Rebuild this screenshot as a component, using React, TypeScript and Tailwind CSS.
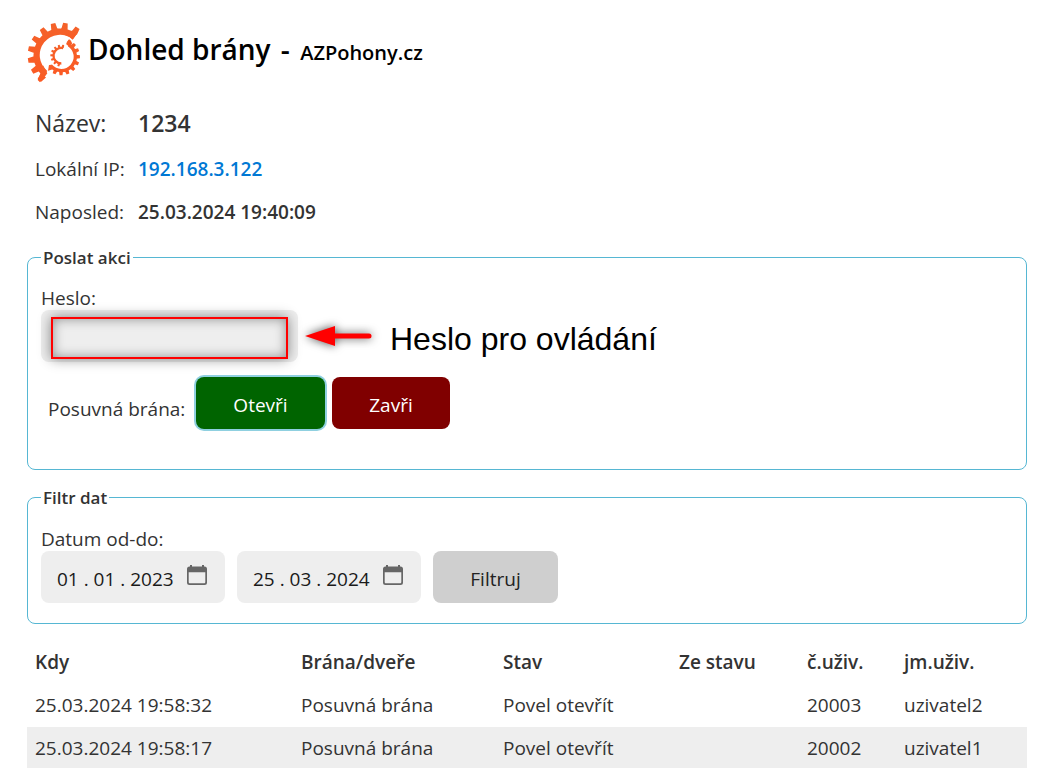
import { useState } from "react";

type Gear = {
  cx: number;
  cy: number;
  inner: number;
  outer: number;
  tip: number;
  from: number;
  to: number;
  teeth: number[];
  half: number;
};

const point = (g: Gear, r: number, deg: number) => {
  const a = (deg * Math.PI) / 180;
  return `${(g.cx + r * Math.cos(a)).toFixed(1)} ${(g.cy - r * Math.sin(a)).toFixed(1)}`;
};

// Partial gear ring, angles in degrees counter-clockwise from the right.
function gearPath(g: Gear) {
  const large = g.to - g.from > 180 ? 1 : 0;
  const ring =
    `M${point(g, g.outer, g.from)} A${g.outer} ${g.outer} 0 ${large} 0 ${point(g, g.outer, g.to)} ` +
    `L${point(g, g.inner, g.to)} A${g.inner} ${g.inner} 0 ${large} 1 ${point(g, g.inner, g.from)}Z`;
  const teeth = g.teeth.map(
    (t) =>
      `M${point(g, g.outer - 2, t + g.half * 1.3)} L${point(g, g.outer - 2, t - g.half * 1.3)} ` +
      `L${point(g, g.tip, t - g.half * 0.75)} L${point(g, g.tip, t + g.half * 0.75)}Z`
  );
  return ring + teeth.join("");
}

const bigGear: Gear = {
  cx: 136, cy: 136, inner: 61, outer: 81, tip: 98, from: 52, to: 230, half: 5.4,
  teeth: [58, 81, 103, 125, 147, 168, 189, 210, 230],
};
const middleGear: Gear = {
  cx: 139, cy: 140, inner: 37, outer: 47, tip: 56, from: -140, to: 58, half: 6,
  teeth: [-113, -91, -69, -46, -23, 0, 22, 43, 62],
};
const smallGear: Gear = {
  cx: 139, cy: 137, inner: 20, outer: 27, tip: 33, from: 76, to: 270, half: 6.5,
  teeth: [80, 104, 128, 153, 178, 203, 228, 254],
};

function Logo() {
  return (
    <svg viewBox="36 36 162 186" className="h-[62px] w-[54px] shrink-0" aria-hidden="true">
      <defs>
        <linearGradient id="logo" x1="0" y1="0" x2="0" y2="1">
          <stop offset="0" stopColor="#f4622a" />
          <stop offset="1" stopColor="#fb5a24" />
        </linearGradient>
      </defs>
      <g fill="url(#logo)">
        <path d={gearPath(bigGear)} />
        <path d="M170 62 L190 64 L173 89 Q163 79 150 76Z" />
        <path d="M84 166 L97 190 L88 202 L75 217 L68 210 L78 186Z" />
        <path d={gearPath(middleGear)} />
        <path d="M163 88 L153 102 L163 110 L172 100Z" />
        <path d="M99 182 L102 165 L110 164 L114 178Z" />
        <path d={gearPath(smallGear)} />
      </g>
    </svg>
  );
}

function CalendarIcon() {
  return (
    <svg viewBox="0 0 20 20" className="h-5 w-5" aria-hidden="true">
      <path
        fill="#666"
        fillRule="evenodd"
        d="M3 0h2v1.500h10V0h2v1.500h.5A2.500 2.500 0 0 1 20 4v13.500a2.500 2.500 0 0 1-2.500 2.500h-15A2.500 2.500 0 0 1 0 17.500V4a2.500 2.500 0 0 1 2.500-2.500H3zM1.700 7.200v9.800c0 .8.500 1.300 1.300 1.300h14c.8 0 1.300-.5 1.300-1.300V7.200z"
      />
    </svg>
  );
}

function DateField({ label, initial }: { label: string; initial: string }) {
  const [value, setValue] = useState(initial);
  return (
    <div className="flex h-13 w-[184px] items-center rounded-lg bg-[#eee] pr-[18px] pl-4">
      <input
        type="text"
        aria-label={label}
        value={value}
        onChange={(e) => setValue(e.target.value)}
        className="h-full min-w-0 flex-1 bg-transparent pt-1 text-[#1a1a1a] outline-none"
      />
      <button type="button" aria-label={`${label} – kalendář`} className="pb-1">
        <CalendarIcon />
      </button>
    </div>
  );
}

const rows = [
  ["25.03.2024 19:58:32", "Posuvná brána", "Povel otevřít", "", "20003", "uzivatel2"],
  ["25.03.2024 19:58:17", "Posuvná brána", "Povel otevřít", "", "20002", "uzivatel1"],
];

const columns = [
  { title: "Kdy", width: "w-[26.6%]" },
  { title: "Brána/dveře", width: "w-[20.2%]" },
  { title: "Stav", width: "w-[17.6%]" },
  { title: "Ze stavu", width: "w-[12.8%]" },
  { title: "č.uživ.", width: "w-[9.7%]" },
  { title: "jm.uživ.", width: "w-[13.1%]" },
];

export default function App() {
  const [password, setPassword] = useState("");
  return (
    <main className="bg-white pt-[22px] pr-7 pl-[27px] font-['Open_Sans','Noto_Sans',sans-serif] text-[19px] leading-[27px] text-[#333]">
      <header className="flex items-center gap-[7px]">
        <Logo />
        <h1 className="pb-1 text-[28px] leading-10 font-semibold text-black">
          Dohled brány <span className="px-[3px]">-</span> <small className="text-[20px]">AZPohony.cz</small>
        </h1>
      </header>

      <dl className="mt-[15px] grid grid-cols-[103px_1fr] px-2">
        <dt className="py-2 text-[23px] leading-[33px]">Název:</dt>
        <dd className="py-2 text-[23px] leading-[33px] font-semibold">1234</dd>
        <dt className="py-2">Lokální IP:</dt>
        <dd className="py-2 font-semibold">
          <a href="http://192.168.3.122" className="text-[#0078d4]">192.168.3.122</a>
        </dd>
        <dt className="py-2">Naposled:</dt>
        <dd className="py-2 font-semibold">25.03.2024 19:40:09</dd>
      </dl>

      <fieldset className="mt-[10px] rounded-lg border border-[#56b7d3] px-[13px] pt-[15px] pb-10">
        <legend className="px-0.5 text-[17px] font-semibold">Poslat akci</legend>
        <label htmlFor="password" className="block leading-6">Heslo:</label>
        <div className="flex items-center">
          <div className="relative w-[257px]">
            <input
              id="password"
              type="password"
              value={password}
              onChange={(e) => setPassword(e.target.value)}
              className="block h-13 w-full rounded-lg bg-[#eee] px-4 outline-none"
            />
            <div className="pointer-events-none absolute inset-x-2.5 top-[7px] bottom-[3px] border-2 border-[#f00] shadow-[0_0_12px_rgba(0,0,0,0.45),inset_0_0_12px_rgba(0,0,0,0.4)]" />
          </div>
          <svg
            viewBox="0 0 67 20"
            className="ml-[7px] h-5 w-[67px] overflow-visible drop-shadow-[0_0_5px_rgba(0,0,0,0.7)]"
            aria-hidden="true"
          >
            <path d="M0 10 L30 0 V20Z" fill="#f00" />
            <path d="M28 10 H64" stroke="#f00" strokeWidth="5" strokeLinecap="round" />
          </svg>
          <span className="ml-[18px] pt-1.5 font-['Liberation_Sans',Arial,sans-serif] text-[32px] leading-10 text-black">
            Heslo pro ovládání
          </span>
        </div>
        <div className="mt-[15px] flex items-center pl-[7px]">
          <span className="w-[148px] pt-3">Posuvná brána:</span>
          <button
            type="button"
            className="h-13 w-[129px] rounded-lg bg-[#006400] pt-1 text-white shadow-[0_0_0_2px_#8fd0e0]"
          >
            Otevři
          </button>
          <button type="button" className="ml-[7px] h-13 w-[118px] rounded-lg bg-[#800000] pt-1 text-white">
            Zavři
          </button>
        </div>
      </fieldset>

      <fieldset className="mt-[14px] rounded-lg border border-[#56b7d3] px-[13px] pt-4 pb-5">
        <legend className="px-0.5 text-[17px] font-semibold">Filtr dat</legend>
        <div className="leading-6">Datum od-do:</div>
        <div className="flex gap-3">
          <DateField label="Datum od" initial="01 . 01 . 2023" />
          <DateField label="Datum do" initial="25 . 03 . 2024" />
          <button type="button" className="h-13 w-[125px] rounded-lg bg-[#cfcfcf] pt-1 text-[#222]">
            Filtruj
          </button>
        </div>
      </fieldset>

      <table className="mt-[17px] w-full table-fixed text-left">
        <thead>
          <tr>
            {columns.map((c) => (
              <th key={c.title} className={`${c.width} px-2 py-2 font-semibold`}>{c.title}</th>
            ))}
          </tr>
        </thead>
        <tbody>
          {rows.map((row) => (
            <tr key={row[0]} className="even:bg-[#eee]">
              {row.map((cell, i) => (
                <td key={i} className="px-2 py-2">{cell}</td>
              ))}
            </tr>
          ))}
        </tbody>
      </table>
    </main>
  );
}
